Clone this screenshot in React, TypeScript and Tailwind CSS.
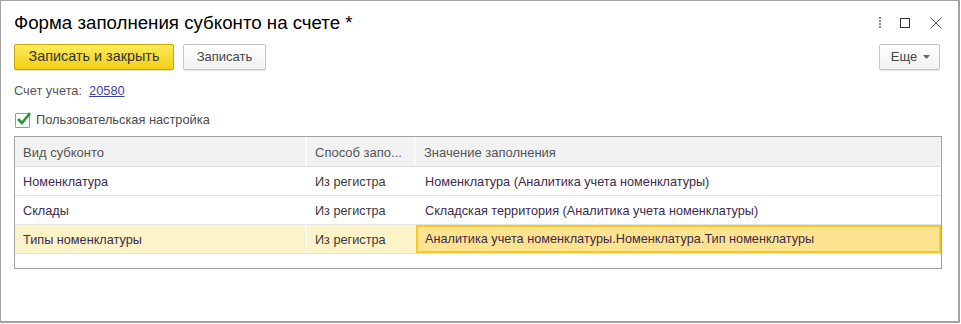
import React from "react";

const font = { fontFamily: '"Liberation Sans", Arial, sans-serif' };

function Row({ a, b, c, selected }: { a: string; b: string; c: string; selected?: boolean }) {
  return (
    <div className={`flex h-[29px] border-b border-[#e4e4e4] text-[12.7px] ${selected ? "bg-[#fdf3c8]" : "bg-white"}`}>
      <div className={`w-[292px] flex items-center pl-[8px] pt-[3px] text-[#3e2a4c] ${selected ? "border-r border-white" : ""}`}>{a}</div>
      <div className={`w-[109px] flex items-center pl-[8px] pt-[3px] text-[#3a3a3a] ${selected ? "border-r border-white" : ""}`}>{b}</div>
      {selected ? (
        <div className="flex-1 flex items-center pl-[7px] pt-[2px] bg-[#fce38f] border-2 border-[#f6c822] text-[#3e2a4c]">{c}</div>
      ) : (
        <div className="flex-1 flex items-center pl-[9px] pt-[3px] text-[#3e2a4c]">{c}</div>
      )}
    </div>
  );
}

export default function App() {
  return (
    <div className="w-[961px] h-[324px] bg-white" style={font}>
      <div className="w-[960px] h-[323px] border border-[#a3a3a3] border-b-2 border-r-2 flex flex-col">
        {/* Title */}
        <div className="h-[43px] flex items-center pl-[13px] pr-[14px]">
          <div className="text-[18.7px] text-black flex-1 pt-[1px]">Форма заполнения субконто на счете *</div>
          <div className="flex items-center">
            <div className="w-[14px] flex flex-col items-center gap-[1px] mr-[13px]">
              <div className="w-[2px] h-[2px] bg-[#8a8a8a]" />
              <div className="w-[2px] h-[2px] bg-[#8a8a8a]" />
              <div className="w-[2px] h-[2px] bg-[#8a8a8a]" />
              <div className="w-[2px] h-[2px] bg-[#8a8a8a]" />
            </div>
            <div className="w-[10px] h-[10px] border border-[#333] mr-[20px]" />
            <svg width="12" height="12" viewBox="0 0 12 12" className="mr-[2px]">
              <path d="M0.5 0.5 L11.5 11.5 M11.5 0.5 L0.5 11.5" stroke="#555" strokeWidth="1" fill="none" />
            </svg>
          </div>
        </div>
        {/* Toolbar */}
        <div className="h-[27px] flex items-start pl-[13px] pr-[18px]">
          <button className="h-[26px] w-[160px] rounded-[2px] border border-[#c7a800] bg-gradient-to-b from-[#fcea57] to-[#f2cf00] text-[14.4px] text-[#333] shadow-[0_1px_1px_rgba(0,0,0,0.15)]">
            Записать и закрыть
          </button>
          <button className="ml-[9px] h-[26px] w-[83px] rounded-[2px] border border-[#c4c4c4] bg-gradient-to-b from-white to-[#f1f1f1] text-[13px] text-[#444] shadow-[0_1px_1px_rgba(0,0,0,0.12)]">
            Записать
          </button>
          <div className="flex-1" />
          <button className="h-[26px] w-[61px] rounded-[2px] border border-[#c4c4c4] bg-gradient-to-b from-white to-[#f1f1f1] text-[13px] text-[#444] shadow-[0_1px_1px_rgba(0,0,0,0.12)] flex items-center justify-center gap-[6px] pl-[2px]">
            <span>Еще</span>
            <svg width="7" height="4" viewBox="0 0 7 4"><path d="M0 0 H7 L3.5 4 Z" fill="#666" /></svg>
          </button>
        </div>
        {/* Account */}
        <div className="h-[34px] flex items-center pl-[13px] text-[12.8px] pt-[6px]">
          <span className="text-[#555]">Счет учета:</span>
          <span className="ml-[7px] text-[#3b3fa6] underline">20580</span>
        </div>
        {/* Checkbox */}
        <div className="h-[30px] flex items-center pl-[14px] text-[12.8px]">
          <div className="w-[15px] h-[15px] border border-[#9a9a9a] rounded-[1px] bg-white relative">
            <svg width="16" height="15" viewBox="0 0 16 15" className="absolute left-[0px] top-[-3px]">
              <path d="M2 8 L6 12 L14 2" stroke="#1f9a3a" strokeWidth="2.6" fill="none" />
            </svg>
          </div>
          <span className="ml-[6px] text-[#4a4a4a]">Пользовательская настройка</span>
        </div>
        {/* Table */}
        <div className="ml-[13px] mt-[1px] w-[928px] h-[133px] border border-[#a3a3a3] flex flex-col">
          <div className="flex h-[30px] bg-[#f2f2f2] border-b border-[#dedede] text-[13px] text-[#555]">
            <div className="w-[292px] flex items-center pl-[8px] pt-[2px] border-r-2 border-[#fafafa]">Вид субконто</div>
            <div className="w-[109px] flex items-center pl-[8px] pt-[2px] border-r-2 border-[#fafafa]">Способ запо...</div>
            <div className="flex-1 flex items-center pl-[8px] pt-[2px]">Значение заполнения</div>
          </div>
          <Row a="Номенклатура" b="Из регистра" c="Номенклатура (Аналитика учета номенклатуры)" />
          <Row a="Склады" b="Из регистра" c="Складская территория (Аналитика учета номенклатуры)" />
          <Row a="Типы номенклатуры" b="Из регистра" c="Аналитика учета номенклатуры.Номенклатура.Тип номенклатуры" selected />
        </div>
      </div>
    </div>
  );
}
